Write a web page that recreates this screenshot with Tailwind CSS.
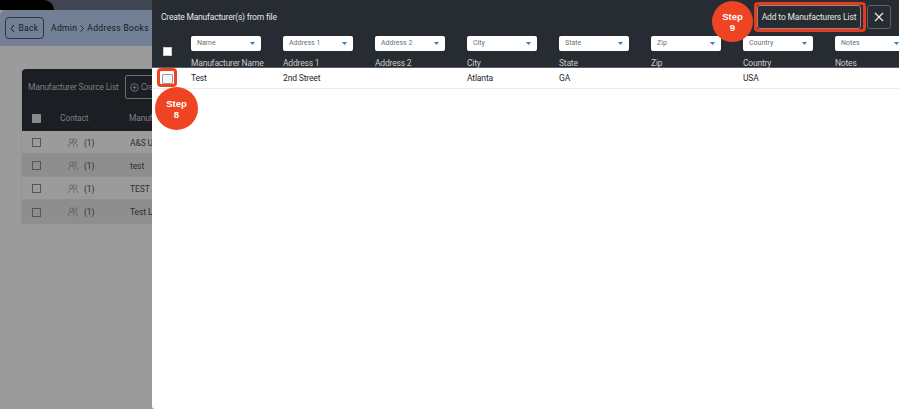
<!DOCTYPE html>
<html lang="en">
<head>
    <meta charset="UTF-8">
    <title>Create Manufacturers from file</title>
    <script src="https://cdn.jsdelivr.net/npm/@tailwindcss/browser@4"></script>
</head>
<body class="bg-[#9b9b9b] font-['Roboto',sans-serif] overflow-hidden">
<div class="relative h-[409px] w-[899px] overflow-hidden">
    <!-- page behind the drawer -->
    <div class="w-[899px]">
        <div class="h-[10px] bg-[#3f4652]"><div class="h-full w-[54px] rounded-tr-[12px] bg-black"></div></div>
        <div class="flex h-[36px] items-center gap-[7px] rounded-tl-[6px] bg-[#727f95] pl-[5px] text-[8.500px] tracking-[0.35px] whitespace-nowrap text-[#16191d]">
            <div class="flex h-[22px] w-[39px] shrink-0 items-center justify-center gap-[3px] rounded-[4px] border border-[#2a3442]">
                <svg width="5" height="9" viewBox="0 0 5 9" fill="none" stroke="#16191d"><path d="M4 1 1 4.5 4 8"/></svg>
                <span>Back</span>
            </div>
            <div class="flex items-center gap-[3px]">
                <span>Admin</span>
                <svg width="4" height="7" viewBox="0 0 4 7" fill="none" stroke="#16191d" stroke-width="0.8"><path d="M.5.5l3 3-3 3"/></svg>
                <span>Address Books</span>
            </div>
        </div>
        <div class="mt-[23px] ml-[21px] w-[860px] border-l border-[#939393]">
            <div class="h-[62px] rounded-tl-[4px] bg-[#1b1e22] text-[8.500px] tracking-[-0.2px] whitespace-nowrap text-[#7c7f82]">
                <div class="flex h-[36px] items-center gap-[7px] pl-[6px]">
                    <span class="w-[90px] shrink-0 pt-[1px]">Manufacturer Source List</span>
                    <div class="flex h-[24px] w-[70px] items-center gap-[2px] rounded-[2px] border border-[#6c6f72] pl-[4px]">
                        <svg class="shrink-0" width="9" height="9" viewBox="0 0 9 9" fill="none" stroke="#7c7f82" stroke-width="0.8"><circle cx="4.500" cy="4.500" r="3.800"/><path d="M4.500 2.500v4M2.500 4.500h4"/></svg>
                        <span>Create</span>
                    </div>
                </div>
                <div class="flex h-[26px] items-center pl-[10px]">
                    <div class="h-[9px] w-[9px] shrink-0 rounded-[1px] bg-[#8a8a8a]"></div>
                    <span class="ml-[19px] w-[69px] shrink-0 pt-[1px]">Contact</span>
                    <span class="pt-[1px]">Manufacturer</span>
                </div>
            </div>
            <div class="flex h-[23px] items-center border-b border-[#8f8f8f] pt-[1px] pl-[10px] text-[8.500px] tracking-[-0.1px] whitespace-nowrap text-[#2f2f2f]">
                <div class="h-[9px] w-[9px] shrink-0 border border-[#555]"></div>
                <svg class="ml-[27px] shrink-0" width="10" height="10" viewBox="0 0 11 11" fill="none" stroke="#555" stroke-width="0.7"><circle cx="3.600" cy="3" r="2"/><circle cx="7.600" cy="3" r="2"/><path d="M.6 10c0-3 1-4.500 3-4.500s3 1.500 3 4.500M7 5.500c2 0 3.400 1.500 3.400 4.500"/></svg>
                <span class="ml-[6px] w-[46px] shrink-0 pt-[1px]">(1)</span>
                <span class="pt-[1px]">A&amp;S Uniforms</span>
            </div>
            <div class="flex h-[23px] items-center border-b border-[#8f8f8f] bg-[#8e8e8e] pt-[1px] pl-[10px] text-[8.500px] tracking-[-0.1px] whitespace-nowrap text-[#2f2f2f]">
                <div class="h-[9px] w-[9px] shrink-0 border border-[#555]"></div>
                <svg class="ml-[27px] shrink-0" width="10" height="10" viewBox="0 0 11 11" fill="none" stroke="#555" stroke-width="0.7"><circle cx="3.600" cy="3" r="2"/><circle cx="7.600" cy="3" r="2"/><path d="M.6 10c0-3 1-4.500 3-4.500s3 1.500 3 4.500M7 5.500c2 0 3.400 1.500 3.400 4.500"/></svg>
                <span class="ml-[6px] w-[46px] shrink-0 pt-[1px]">(1)</span>
                <span class="pt-[1px]">test</span>
            </div>
            <div class="flex h-[23px] items-center border-b border-[#8f8f8f] pt-[1px] pl-[10px] text-[8.500px] tracking-[-0.1px] whitespace-nowrap text-[#2f2f2f]">
                <div class="h-[9px] w-[9px] shrink-0 border border-[#555]"></div>
                <svg class="ml-[27px] shrink-0" width="10" height="10" viewBox="0 0 11 11" fill="none" stroke="#555" stroke-width="0.7"><circle cx="3.600" cy="3" r="2"/><circle cx="7.600" cy="3" r="2"/><path d="M.6 10c0-3 1-4.500 3-4.500s3 1.500 3 4.500M7 5.500c2 0 3.400 1.500 3.400 4.500"/></svg>
                <span class="ml-[6px] w-[46px] shrink-0 pt-[1px]">(1)</span>
                <span class="pt-[1px]">TEST ABC</span>
            </div>
            <div class="flex h-[24px] items-center border-b border-[#8f8f8f] bg-[#8e8e8e] pt-[1px] pl-[10px] text-[8.500px] tracking-[-0.1px] whitespace-nowrap text-[#2f2f2f]">
                <div class="h-[9px] w-[9px] shrink-0 border border-[#555]"></div>
                <svg class="ml-[27px] shrink-0" width="10" height="10" viewBox="0 0 11 11" fill="none" stroke="#555" stroke-width="0.7"><circle cx="3.600" cy="3" r="2"/><circle cx="7.600" cy="3" r="2"/><path d="M.6 10c0-3 1-4.500 3-4.500s3 1.500 3 4.500M7 5.500c2 0 3.400 1.500 3.400 4.500"/></svg>
                <span class="ml-[6px] w-[46px] shrink-0 pt-[1px]">(1)</span>
                <span class="pt-[1px]">Test LLC</span>
            </div>
        </div>
    </div>

    <!-- drawer -->
    <div class="absolute top-0 right-0 bottom-0 left-[152px] overflow-hidden rounded-bl-[3px] bg-white">
        <div class="h-[68px] border-b border-[#5b6066] bg-[#272c32] text-[#e4e5e6]">
            <div class="flex h-[34px] items-center pr-[8px] pl-[9px]">
                <span class="pt-[1px] text-[8.500px] tracking-[-0.2px]">Create Manufacturer(s) from file</span>
                <div class="ml-auto flex items-center gap-[6px]">
                    <div class="flex h-[24px] w-[104px] items-center justify-center rounded-[3px] border border-[#878b90] text-[8.500px] tracking-[-0.15px] whitespace-nowrap">Add to Manufacturers List</div>
                    <div class="flex h-[24px] w-[24px] items-center justify-center rounded-[3px] border border-[#5f6369]">
                        <svg width="10" height="10" viewBox="0 0 10 10" fill="none" stroke="#f2f2f2" stroke-width="1.100"><path d="M1 1l8 8M9 1 1 9"/></svg>
                    </div>
                </div>
            </div>
            <div class="mt-[2px] flex items-start">
                <div class="mt-[11px] ml-[11px] h-[9px] w-[9px] shrink-0 border border-[#ccc] bg-white"></div>
                <div class="ml-[19px] flex gap-[22px] text-[8.500px] whitespace-nowrap">
                    <div class="w-[70px] shrink-0">
                        <div class="flex h-[15px] items-center justify-between rounded-[2px] bg-white px-[6px] text-[7px] text-[#6b6f73]">Name<svg width="5" height="3" viewBox="0 0 5 3"><path d="M0 0h5L2.500 3z" fill="#2f7fbf"/></svg></div>
                        <div class="mt-[6px] tracking-[-0.2px] text-[#c9cbcd]">Manufacturer Name</div>
                    </div>
                    <div class="w-[70px] shrink-0">
                        <div class="flex h-[15px] items-center justify-between rounded-[2px] bg-white px-[6px] text-[7px] text-[#6b6f73]">Address 1<svg width="5" height="3" viewBox="0 0 5 3"><path d="M0 0h5L2.500 3z" fill="#2f7fbf"/></svg></div>
                        <div class="mt-[6px] tracking-[-0.2px] text-[#c9cbcd]">Address 1</div>
                    </div>
                    <div class="w-[70px] shrink-0">
                        <div class="flex h-[15px] items-center justify-between rounded-[2px] bg-white px-[6px] text-[7px] text-[#6b6f73]">Address 2<svg width="5" height="3" viewBox="0 0 5 3"><path d="M0 0h5L2.500 3z" fill="#2f7fbf"/></svg></div>
                        <div class="mt-[6px] tracking-[-0.2px] text-[#c9cbcd]">Address 2</div>
                    </div>
                    <div class="w-[70px] shrink-0">
                        <div class="flex h-[15px] items-center justify-between rounded-[2px] bg-white px-[6px] text-[7px] text-[#6b6f73]">City<svg width="5" height="3" viewBox="0 0 5 3"><path d="M0 0h5L2.500 3z" fill="#2f7fbf"/></svg></div>
                        <div class="mt-[6px] tracking-[-0.2px] text-[#c9cbcd]">City</div>
                    </div>
                    <div class="w-[70px] shrink-0">
                        <div class="flex h-[15px] items-center justify-between rounded-[2px] bg-white px-[6px] text-[7px] text-[#6b6f73]">State<svg width="5" height="3" viewBox="0 0 5 3"><path d="M0 0h5L2.500 3z" fill="#2f7fbf"/></svg></div>
                        <div class="mt-[6px] tracking-[-0.2px] text-[#c9cbcd]">State</div>
                    </div>
                    <div class="w-[70px] shrink-0">
                        <div class="flex h-[15px] items-center justify-between rounded-[2px] bg-white px-[6px] text-[7px] text-[#6b6f73]">Zip<svg width="5" height="3" viewBox="0 0 5 3"><path d="M0 0h5L2.500 3z" fill="#2f7fbf"/></svg></div>
                        <div class="mt-[6px] tracking-[-0.2px] text-[#c9cbcd]">Zip</div>
                    </div>
                    <div class="w-[70px] shrink-0">
                        <div class="flex h-[15px] items-center justify-between rounded-[2px] bg-white px-[6px] text-[7px] text-[#6b6f73]">Country<svg width="5" height="3" viewBox="0 0 5 3"><path d="M0 0h5L2.500 3z" fill="#2f7fbf"/></svg></div>
                        <div class="mt-[6px] tracking-[-0.2px] text-[#c9cbcd]">Country</div>
                    </div>
                    <div class="w-[70px] shrink-0">
                        <div class="flex h-[15px] items-center justify-between rounded-[2px] bg-white px-[6px] text-[7px] text-[#6b6f73]">Notes<svg width="5" height="3" viewBox="0 0 5 3"><path d="M0 0h5L2.500 3z" fill="#2f7fbf"/></svg></div>
                        <div class="mt-[6px] tracking-[-0.2px] text-[#c9cbcd]">Notes</div>
                    </div>
                </div>
            </div>
        </div>
        <div class="flex h-[21px] items-center border-b border-[#ececec] pt-[1px] text-[8.500px] tracking-[-0.15px] text-[#25282b]">
            <div class="ml-[10px] h-[10px] w-[11px] shrink-0 rounded-[1px] border border-[#9a9a9a] bg-[#f4f4f4]"></div>
            <div class="ml-[18px] w-[92px] shrink-0">Test</div>
            <div class="w-[92px] shrink-0">2nd Street</div>
            <div class="w-[92px] shrink-0"></div>
            <div class="w-[92px] shrink-0">Atlanta</div>
            <div class="w-[92px] shrink-0">GA</div>
            <div class="w-[92px] shrink-0"></div>
            <div class="w-[92px] shrink-0">USA</div>
        </div>
    </div>

    <!-- tutorial annotations -->
    <div class="absolute top-[68px] left-[157px] h-[19px] w-[20px] rounded-[4px] border-[3px] border-[#ee4423]"></div>
    <div class="absolute top-[87px] left-[155px] flex h-[43px] w-[43px] items-center justify-center rounded-full bg-[#ee4423] text-center font-['Liberation_Sans',sans-serif] text-[9.500px] leading-[11px] font-bold text-white">Step<br>8</div>
    <div class="absolute top-[1px] left-[712px] flex h-[41px] w-[41px] items-center justify-center rounded-full bg-[#ee4423] text-center font-['Liberation_Sans',sans-serif] text-[9.500px] leading-[11px] font-bold text-white">Step<br>9</div>
    <div class="absolute top-[2px] left-[754px] h-[30px] w-[112px] rounded-[4px] border-[3px] border-[#e8391d]"></div>
</div>
</body>
</html>
